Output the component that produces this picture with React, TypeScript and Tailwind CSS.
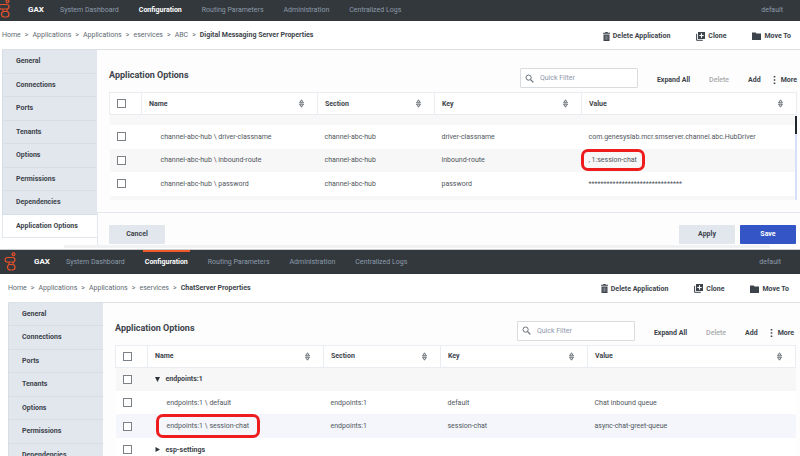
import type { ReactNode } from "react";

const NAV = ["System Dashboard", "Configuration", "Routing Parameters", "Administration", "Centralized Logs"];
const SECTIONS = ["General", "Connections", "Ports", "Tenants", "Options", "Permissions", "Dependencies", "Application Options"];

function Logo({ className }: { className: string }) {
  return (
    <svg viewBox="0 0 12 20" className={className} fill="none" stroke="#e8512a" strokeWidth="1.2" aria-hidden="true">
      <circle cx="9.5" cy="3.3" r="1.4" />
      <rect x="1.1" y="6.5" width="9.9" height="4.5" rx="2.2" />
      <path d="M5 11v2.500M9 11v2.500" />
      <rect x="3.500" y="13.500" width="7.500" height="5.500" rx="2.700" />
    </svg>
  );
}

function TopNav({ shifted }: { shifted?: boolean }) {
  return (
    <header className={`flex items-stretch bg-[#33383d] text-[#8c9baa] ${shifted ? "h-6 pl-1 pr-[19px]" : "h-[21px] pr-[17px]"}`}>
      <Logo className={`h-5 w-3 shrink-0 ${shifted ? "mt-px" : "-mt-0.5 -ml-0.5"}`} />
      <span className={`ml-[18px] w-[30px] text-[8px] leading-4 font-bold text-white ${shifted ? "pt-1" : "pt-0.5"}`}>GAX</span>
      <nav className="flex gap-4" aria-label="Main">
        {NAV.map((item) => {
          const active = item === "Configuration";
          return (
            <a
              key={item}
              href="#"
              className={`border-t-2 px-0.5 leading-4 ${shifted ? "pt-0.5" : ""} ${active ? "font-bold text-white" : ""} ${
                active && shifted ? "border-[#f0592b]" : "border-transparent"
              }`}
            >
              {item}
            </a>
          );
        })}
      </nav>
      <span className={`ml-auto leading-4 ${shifted ? "pt-1" : "pt-0.5"}`}>default</span>
    </header>
  );
}

function TrashIcon() {
  return (
    <svg viewBox="0 0 7 9" className="h-[9px] w-[7px]" fill="#3c434b" aria-hidden="true">
      <path d="M2.3 0h2.4v.7H7v1.1H0V.7h2.3zM.5 2.4h6V9h-6z" />
      <path d="M2.1 3.4v4.4M3.5 3.4v4.4M4.9 3.4v4.4" stroke="#a4a9ae" strokeWidth=".6" />
    </svg>
  );
}

function CloneIcon() {
  return (
    <svg viewBox="0 0 9 9" className="h-[9px] w-[9px]" aria-hidden="true">
      <path d="M.6 1.8v6.5h6.2" fill="none" stroke="#3c434b" strokeWidth="1" />
      <path d="M2 0h7v7H2z" fill="#3c434b" />
      <path d="M5.5 1.3v4.4M3.3 3.5h4.4" stroke="#fff" strokeWidth="1.1" />
    </svg>
  );
}

function FolderIcon() {
  return (
    <svg viewBox="0 0 9 8" className="h-2 w-[9px]" fill="#3c434b" aria-hidden="true">
      <path d="M0 .5h3.6l1 1.1H9V8H0z" />
    </svg>
  );
}

function SortIcon() {
  return (
    <svg viewBox="0 0 5 9" className="h-[9px] w-[5px]" fill="#d4d7da" stroke="#555b61" strokeWidth=".8" aria-hidden="true">
      <path d="M.5 3.800 2.500.8l2 3zM.5 5.200h4L2.500 8.200z" />
    </svg>
  );
}

function Action({ icon, children }: { icon: ReactNode; children: ReactNode }) {
  return (
    <button className="flex items-center gap-[3px] font-bold">
      {icon}
      {children}
    </button>
  );
}

function Breadcrumb({ path, current, className }: { path: string[]; current: string; className: string }) {
  return (
    <div className={`flex h-7 items-center justify-between bg-white ${className}`}>
      <nav className="flex gap-1 whitespace-nowrap text-[#626a72]" aria-label="Breadcrumb">
        {path.map((p, i) => (
          <span key={i} className="flex gap-1">
            <a href="#">{p}</a>
            <span>&gt;</span>
          </span>
        ))}
        <span className="font-bold text-[#3c434b]">{current}</span>
      </nav>
      <div className="flex gap-[26px] pt-0.5">
        <Action icon={<TrashIcon />}>Delete Application</Action>
        <Action icon={<CloneIcon />}>Clone</Action>
        <Action icon={<FolderIcon />}>Move To</Action>
      </div>
    </div>
  );
}

function Sidebar() {
  return (
    <nav className="grid h-[188px] w-[95px] shrink-0 auto-rows-fr" aria-label="Sections">
      {SECTIONS.map((s) => (
        <a
          key={s}
          href="#"
          className={`flex items-center border-b border-l pl-[13px] font-bold ${
            s === "Application Options" ? "border-[#e2e8ee] bg-white" : "border-[#d5dde6] bg-[#e2e7ee]"
          }`}
        >
          {s}
        </a>
      ))}
    </nav>
  );
}

function Toolbar({ className = "" }: { className?: string }) {
  return (
    <div className={`flex justify-between pt-[18px] ${className}`}>
      <h2 className="pt-px text-[9px] leading-3 font-bold">Application Options</h2>
      <div className="flex font-bold">
        <label className="flex h-5 w-[118px] items-center gap-1.5 rounded-[1px] border border-[#d9dcdf] bg-white pl-1">
          <svg viewBox="0 0 9 9" className="h-[9px] w-[9px] shrink-0" fill="none" stroke="#6b737b" aria-label="Search">
            <circle cx="3.6" cy="3.6" r="2.6" />
            <path d="m5.6 5.6 2.8 2.8" strokeWidth="1.3" />
          </svg>
          <input className="w-full min-w-0 font-normal outline-none placeholder:text-[#8e96ab]" placeholder="Quick Filter" />
        </label>
        <div className="flex items-center pt-1">
          <button className="ml-[19px]">Expand All</button>
          <button className="ml-[19px] font-medium text-[#a6a9ac]">Delete</button>
          <button className="ml-[19px]">Add</button>
          <button className="ml-3 flex items-center gap-[5px]">
            <svg viewBox="0 0 3 8" className="h-2 w-[3px]" fill="#3c434b" aria-hidden="true">
              <path d="M.7 0h1.6v1.6H.7zM.7 3.2h1.6v1.6H.7zM.7 6.4h1.6V8H.7z" />
            </svg>
            More
          </button>
        </div>
      </div>
    </div>
  );
}

function Check({ label }: { label: string }) {
  return (
    <input type="checkbox" aria-label={label} className="block size-[9px] appearance-none border border-[#7b8187] bg-white checked:bg-[#3355c5]" />
  );
}

type Row = {
  name: string;
  section?: string;
  key?: string;
  value?: string;
  group?: "open" | "closed";
  marked?: "name" | "value";
  tone: string;
};

function Highlight({ className }: { className: string }) {
  return <span className={`pointer-events-none absolute rounded-[7px] border-[#ee1c1c] ${className}`} />;
}

function Name({ row }: { row: Row }) {
  if (!row.group)
    return (
      <span className="relative">
        {row.name}
        {row.marked === "name" && <Highlight className="-inset-x-[11px] -inset-y-2 border-3" />}
      </span>
    );
  return (
    <button className="flex items-center gap-1.5 font-bold">
      <svg viewBox="0 0 5 5" className="size-[5px]" fill="#2d3339" aria-hidden="true">
        <path d={row.group === "open" ? "M0 0h5L2.500 5z" : "M.5 0 5 2.500.500 5z"} />
      </svg>
      {row.name}
    </button>
  );
}

function OptionsTable({ rows, clipped }: { rows: Row[]; clipped?: boolean }) {
  const head = "border border-[#e9edf1] pl-[7px] text-left font-bold";
  return (
    <table className="w-full table-fixed border-collapse">
      <colgroup>
        <col className="w-8" />
        <col className="w-44" />
        <col className="w-[117px]" />
        <col className="w-[147px]" />
        <col />
      </colgroup>
      <thead>
        <tr className="h-[22px] bg-white">
          <th className={head}>
            <Check label="Select all options" />
          </th>
          {["Name", "Section", "Key", "Value"].map((h) => (
            <th key={h} className={head}>
              <span className="flex items-center justify-between pr-[13px]">
                {h}
                <SortIcon />
              </span>
            </th>
          ))}
        </tr>
      </thead>
      <tbody className="text-[#50565d]">
        {clipped && (
          <tr className="h-2.5 bg-[#f7f7f7]">
            <td colSpan={5} />
          </tr>
        )}
        {rows.map((r, i) => (
          <tr key={r.name} className={`${i % 2 ? "h-[23px]" : "h-6"} ${r.tone}`}>
            <td className="pl-[7px]">
              <Check label={r.name} />
            </td>
            <td className={r.group ? "pl-[7px] text-[#3c434b]" : "pl-[19px]"}>
              <Name row={r} />
            </td>
            <td className="pl-[7px]">{r.section}</td>
            <td className="pl-[7px]">{r.key}</td>
            <td className="pl-[7px]">
              <span className="relative">
                {r.value}
                {r.marked === "value" && <Highlight className="-inset-x-2 -inset-y-[7px] border-3" />}
              </span>
            </td>
          </tr>
        ))}
        {clipped && (
          <tr className="h-1 bg-[#f7f7f7]">
            <td colSpan={5} />
          </tr>
        )}
      </tbody>
    </table>
  );
}

const HUB_ROWS: Row[] = [
  { name: "channel-abc-hub \\ driver-classname", section: "channel-abc-hub", key: "driver-classname", value: "com.genesyslab.mcr.smserver.channel.abc.HubDriver", tone: "bg-white" },
  { name: "channel-abc-hub \\ inbound-route", section: "channel-abc-hub", key: "inbound-route", value: ", 1:session-chat", marked: "value", tone: "bg-[#f7f7f7]" },
  { name: "channel-abc-hub \\ password", section: "channel-abc-hub", key: "password", value: "*******************************", tone: "bg-white" },
];

const CHAT_ROWS: Row[] = [
  { name: "endpoints:1", group: "open", tone: "bg-[#f7f7f7]" },
  { name: "endpoints:1 \\ default", section: "endpoints:1", key: "default", value: "Chat inbound queue", tone: "bg-white" },
  { name: "endpoints:1 \\ session-chat", section: "endpoints:1", key: "session-chat", value: "async-chat-greet-queue", marked: "name", tone: "bg-[#f4f6fb]" },
  { name: "esp-settings", group: "closed", tone: "bg-white" },
];

export default function App() {
  return (
    <div className="h-screen overflow-hidden bg-white font-[Roboto,sans-serif] text-[7px] leading-[10px] text-[#3c434b]">
      <section>
        <TopNav />
        <Breadcrumb className="pr-[9px] pl-0.5" path={["Home", "Applications", "Applications", "eservices", "ABC"]} current="Digital Messaging Server Properties" />
        <div className="ml-0.5 flex border-t border-[#dde0e3]">
          <Sidebar />
          <div className="min-w-0 flex-1 bg-[#fdfdfd]">
            <div className="border-b border-[#e2e8ee] pr-[3px] pb-3 pl-3">
              <Toolbar />
              <div className="relative mt-1">
                <OptionsTable rows={HUB_ROWS} clipped />
                <div className="absolute top-6 right-0 bottom-0 w-0.5 bg-[#d6e0f8]">
                  <div className="h-[18px] bg-[#22262b]" />
                </div>
              </div>
            </div>
            <div className="flex gap-[5px] border-l border-[#e2e8ee] pt-3 pr-1 pb-px pl-[11px] font-bold">
              <button className="mr-auto h-[19px] w-14 rounded-[1px] bg-[#e2e7ee]">Cancel</button>
              <button className="h-[19px] w-14 rounded-[1px] bg-[#e2e7ee]">Apply</button>
              <button className="h-[19px] w-14 rounded-[1px] bg-[#3355c5] text-white">Save</button>
            </div>
          </div>
        </div>
        <div className="mr-[30px] ml-16 h-[3px] bg-[#f1f2f4]" />
      </section>
      <section className="mt-px border-t border-[#c9cbcd]">
        <TopNav shifted />
        <Breadcrumb className="pr-[11px] pl-2" path={["Home", "Applications", "Applications", "eservices"]} current="ChatServer Properties" />
        <div className="ml-2 flex border-t border-[#dde0e3]">
          <Sidebar />
          <div className="min-w-0 flex-1 bg-[#fdfdfd] pr-1 pl-3">
            <Toolbar className="pr-0.5" />
            <div className="mt-1">
              <OptionsTable rows={CHAT_ROWS} />
            </div>
          </div>
        </div>
      </section>
    </div>
  );
}
